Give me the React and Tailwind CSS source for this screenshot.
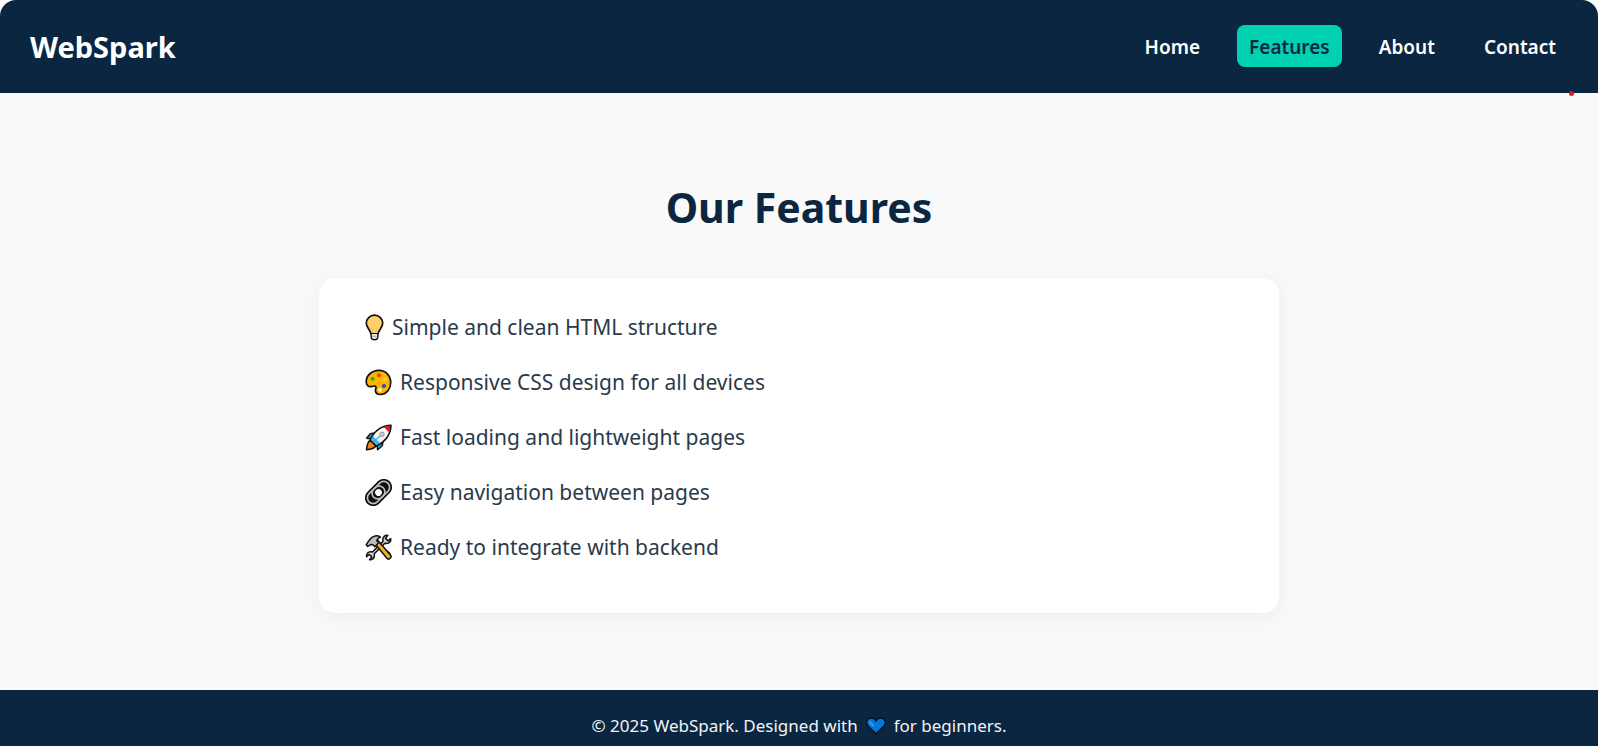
function BulbIcon() {
  return (
    <svg viewBox="0 0 19 27" className="h-[27px] w-[19px] shrink-0" aria-hidden="true">
      <path d="M6.3 18.5h6.4v4.6c0 1.6-1.3 2.6-3.2 2.6s-3.2-1-3.2-2.6z" fill="#e4e6ea" stroke="#111" strokeWidth="1.7" />
      <path d="M9.5 1.2C4.8 1.2 1.3 4.8 1.3 9.3c0 4.1 3.6 6 4.7 10.600h7c1.100-4.600 4.700-6.500 4.700-10.600 0-4.500-3.500-8.100-8.200-8.100z" fill="#ffcf6b" stroke="#111" strokeWidth="1.7" />
      <path d="M7.200 14.500l1.200 4.500M11.800 14.500l-1.200 4.500" stroke="#f3b94e" strokeWidth="1" />
      <path d="M6.800 20h5.400v3.300c0 .9-1 1.500-2.700 1.500s-2.700-.6-2.700-1.500z" fill="#e4e6ea" />
      <path d="M7 22.300h5" stroke="#9aa0a6" strokeWidth=".8" />
    </svg>
  );
}

function PaletteIcon() {
  return (
    <svg viewBox="0 0 27 27" className="size-[27px] shrink-0" aria-hidden="true">
      <path d="M14 1.400C7 1.400 1.200 6.600 1.200 12.600c0 3.600 2.100 5.300 4.900 5 2.200-.2 3.800-1.100 4.700-.1.900 1.200-.8 2.700-.3 4.800.5 2.100 2.600 3.300 5.200 3.200 6-.3 10-5.600 10-12 0-6.800-5-12.100-11.700-12.100z" fill="#ffb404" stroke="#111" strokeWidth="1.7" />
      <circle cx="14" cy="6.300" r="2.100" fill="#e8480c" />
      <circle cx="7.600" cy="9.800" r="2.100" fill="#35b20e" />
      <circle cx="20" cy="10.300" r="2.100" fill="#ffd21c" />
      <circle cx="19" cy="17" r="2.100" fill="#1f4fc4" />
      <circle cx="15" cy="21" r="1.900" fill="#fff3c8" />
    </svg>
  );
}

function RocketIcon() {
  return (
    <svg viewBox="0 0 27 27" className="size-[27px] shrink-0" aria-hidden="true">
      <path d="M9.600 9.100L5.300 9.700 1.600 14.200l4.600.5zM18 17.300l-.7 4.400-4.700 4-.4-4.700z" fill="#28b4e8" stroke="#111" strokeWidth="1.5" strokeLinejoin="round" />
      <path d="M5.200 16.100c-2.500 1.700-3.300 5.200-3.700 9.600 4.300-.3 7.800-1.200 9.500-3.700z" fill="#f58220" stroke="#111" strokeWidth="1.5" strokeLinejoin="round" />
      <path d="M5.300 16C8.100 8.500 15.500 1.500 26 1.300 25.800 11.800 18.500 19 11.200 21.900z" fill="#f4f6f8" stroke="#111" strokeWidth="1.6" strokeLinejoin="round" />
      <path d="M18.900 3.100c1.900-.7 3.900-1.100 6.300-1.100-.1 2.300-.5 4.400-1.200 6.200z" fill="#e81224" />
      <path d="M6.200 16l2-3.800 6.900 6.900-3.700 1.900z" fill="#38b9ea" />
      <path d="M8.900 17.700l6.300-6.100" stroke="#2ab4ea" strokeWidth="1.3" />
      <circle cx="17" cy="10.300" r="2.200" fill="#d2d2d2" stroke="#929292" />
    </svg>
  );
}

function LinkIcon() {
  return (
    <svg viewBox="0 0 27 27" className="size-[27px] shrink-0" aria-hidden="true">
      <g transform="rotate(-45 13.5 13.5)" fill="none">
        <rect x="-2.300" y="5.200" width="31.600" height="16.600" rx="8.300" fill="#0d0d0d" />
        <rect x=".2" y="7.700" width="20" height="11.600" rx="5.800" stroke="#bdbdbd" strokeWidth="1.700" />
        <rect x="6.800" y="7.700" width="20" height="11.600" rx="5.800" stroke="#bdbdbd" strokeWidth="1.700" />
        <circle cx="13.500" cy="13.500" r="4" fill="#fff" stroke="#0d0d0d" strokeWidth="1.200" />
      </g>
    </svg>
  );
}

function ToolsIcon() {
  return (
    <svg viewBox="0 0 27 27" className="size-[27px] shrink-0" aria-hidden="true">
      <path d="M22.800 1.400c-2.600-.6-5.300 1.500-5 4.600l.2 1.400L7.500 18l-1.500-.2c-3-.2-5 2.400-4.400 5l2.700-2.300 2.500 2.400-2.300 2.800c2.700.5 5-1.500 4.900-4.400l-.1-1.500L19.900 9.300l1.400.1c3 .1 5-2.300 4.400-4.800l-2.600 2.300-2.600-2.500z" fill="#d2d2d2" stroke="#111" strokeWidth="1.5" strokeLinejoin="round" />
      <path d="M18.200 17.600l1.600-.3c3.500-.3 5.800 1.800 5.700 4.800" fill="none" stroke="#111" strokeWidth="1.5" strokeLinecap="round" />
      <path d="M9.600 9.200l3-2.900 13 14.900c.7 1 .5 2.200-.4 3.100-.9.900-2.200 1-3.100.2z" fill="#f7b024" stroke="#111" strokeWidth="1.5" strokeLinejoin="round" />
      <path d="M1.200 10.800l1.600 1.700 2.800-1.900 2.300.2 1.900 1.900 4-4.100-2-2c.4-1.800 1.900-2.900 3.700-3.500-3.500-2.300-7.500-1.300-9.600 1.200L3.500 7.200z" fill="#bdbdbd" stroke="#111" strokeWidth="1.5" strokeLinejoin="round" />
    </svg>
  );
}

function HeartIcon() {
  return (
    <svg viewBox="0 0 20 18" className="h-[18px] w-5" aria-hidden="true">
      <path d="M10 16.900L2.200 9.300C-1.300 5.600 1.300 1 5.200 1 7.300 1 9 2 10 3.800 11 2 12.700 1 14.800 1c3.900 0 6.500 4.600 3 8.300z" fill="#0078d7" stroke="#051525" strokeWidth="1.6" />
      <path d="M4 5.200l3.200 3.400" stroke="#3d9cec" strokeWidth="1.8" strokeLinecap="round" />
    </svg>
  );
}

const links = ["Home", "Features", "About", "Contact"];

const features = [
  { Icon: BulbIcon, text: "Simple and clean HTML structure" },
  { Icon: PaletteIcon, text: "Responsive CSS design for all devices" },
  { Icon: RocketIcon, text: "Fast loading and lightweight pages" },
  { Icon: LinkIcon, text: "Easy navigation between pages" },
  { Icon: ToolsIcon, text: "Ready to integrate with backend" },
];

export default function App() {
  return (
    <div className="flex min-h-screen flex-col bg-[#fdfdfd] pr-[2px] font-['Noto_Sans','Open_Sans',sans-serif] text-[#0b2641]">
      <header className="relative flex items-center justify-between rounded-t-2xl bg-[#0b2641] px-[30px] pt-[25px] pb-[26px] text-white">
        <div className="pt-[2px] text-[29px] leading-10 font-bold">WebSpark</div>
        <nav className="flex gap-[25px]">
          {links.map((name) => (
            <a
              key={name}
              href={"#" + name.toLowerCase()}
              aria-current={name === "Features" ? "page" : undefined}
              className="rounded-lg px-3 pt-[2px] text-[19px] leading-10 font-semibold aria-[current=page]:bg-[#00d1b2] aria-[current=page]:text-[#0b2641]"
            >
              {name}
            </a>
          ))}
        </nav>
        <span className="absolute right-6 -bottom-[3px] size-[5px] rounded-full bg-[#d32028]" />
      </header>

      <main className="flex-1 bg-[#f9f9f9] px-8 pt-[82px] pb-[76px]">
        <h1 className="text-center text-[41px] leading-[64px] font-bold">Our Features</h1>
        <ul className="mx-auto mt-[39px] flex max-w-[960px] flex-col gap-5 rounded-2xl bg-white px-[46px] pt-8 pb-12 text-[21px] leading-[35px] text-[#2a3a4b] shadow-[0_4px_20px_rgba(0,0,0,0.05)]">
          {features.map(({ Icon, text }) => (
            <li key={text} className="flex items-center gap-2">
              <Icon />
              <span>{text}</span>
            </li>
          ))}
        </ul>
      </main>

      <footer className="bg-[#0b2641] px-8 pt-5 pb-1 text-[17px] leading-8 text-[#f1f4f7]">
        <p className="flex items-center justify-center gap-2">
          <span>© 2025 WebSpark. Designed with</span>
          <HeartIcon />
          <span>for beginners.</span>
        </p>
      </footer>
    </div>
  );
}
